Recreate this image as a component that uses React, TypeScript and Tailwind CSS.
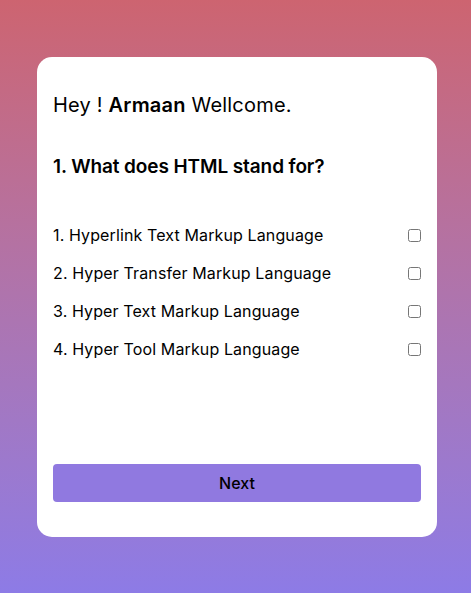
import React from "react";

const options = [
  "1. Hyperlink Text Markup Language",
  "2. Hyper Transfer Markup Language",
  "3. Hyper Text Markup Language",
  "4. Hyper Tool Markup Language",
];

export default function App() {
  return (
    <div
      className="w-full h-[593px] bg-gradient-to-b from-[#cd6470] to-[#8d7be6] pt-[57px] pl-[37px]"
      style={{ fontFamily: "Inter, 'Open Sans', sans-serif" }}
    >
      <div className="w-[400px] h-[480px] bg-white rounded-[15px] px-4 pt-[34px] flex flex-col">
        <div className="text-[20px] leading-[28px] text-black tracking-[0.2px]">
          Hey ! <span className="font-semibold">Armaan</span> Wellcome.
        </div>
        <div className="mt-[34px] text-[19px] leading-[28px] font-semibold text-black tracking-[-0.1px]">
          1. What does HTML stand for?
        </div>
        <div className="mt-[42px] flex flex-col gap-[14px]">
          {options.map((o) => (
            <label key={o} className="flex items-center justify-between h-[24px] text-[16px] text-black tracking-[0.12px]">
              <span>{o}</span>
              <input type="checkbox" className="w-[13px] h-[13px] m-0" />
            </label>
          ))}
        </div>
        <button className="mt-auto mb-[35px] h-[38px] w-full bg-[#9079e0] rounded-[4px] text-[16px] font-medium text-black">
          Next
        </button>
      </div>
    </div>
  );
}
